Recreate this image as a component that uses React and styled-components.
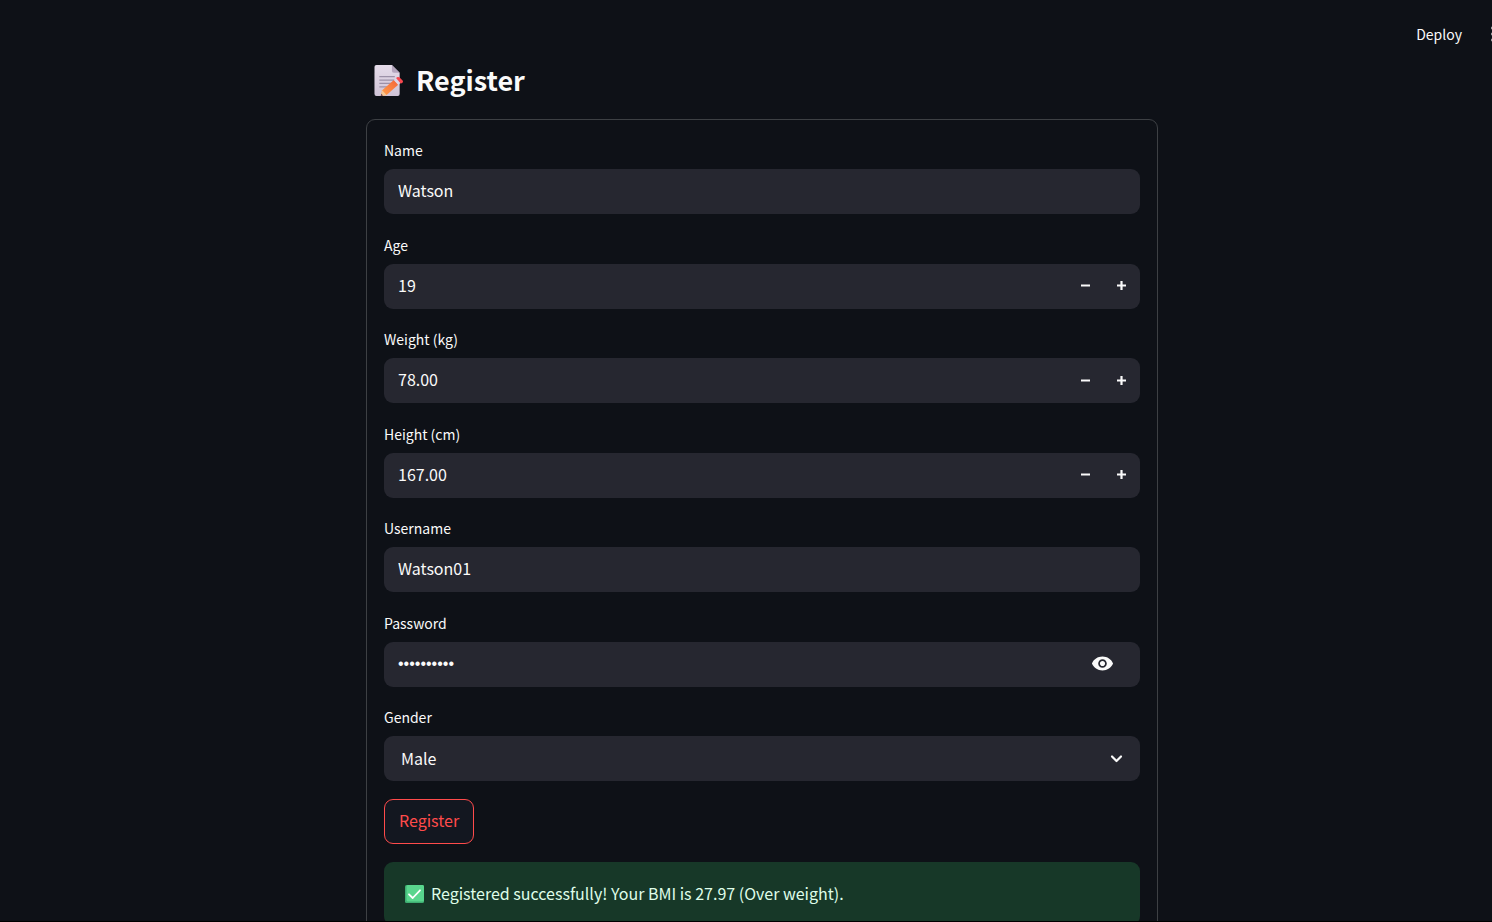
import React, { useState } from "react";
import styled, { createGlobalStyle } from "styled-components";

const GlobalStyle = createGlobalStyle`
  *, *::before, *::after { box-sizing: border-box; }
  html, body { margin: 0; background: #0e1117; }
  body, input, select, button {
    font-family: "Noto Sans CJK SC", "Noto Sans", sans-serif;
    font-size: 16px;
    color: #fafafa;
  }
`;

const Page = styled.div`
  height: 100vh;
  overflow: hidden;
  background: #0e1117;
  border-bottom: 1px solid #000;
`;

const Header = styled.header`
  display: flex;
  justify-content: flex-end;
  align-items: center;
  gap: 15px;
  height: 60px;
  padding-top: 8px;
`;

const HeaderButton = styled.button`
  flex: none;
  border: 0;
  background: none;
  padding: 0 14px;
  font-size: 14px;
  line-height: 24px;
`;

const MenuButton = styled.button`
  flex: none;
  width: 1px;
  height: 24px;
  padding: 0;
  border: 0;
  background: none;
  overflow: hidden;

  svg { display: block; }
`;

const Main = styled.main`
  padding-left: 32px;
`;

const Column = styled.div`
  max-width: 792px;
  margin: 0 auto;
`;

const Title = styled.h1`
  display: flex;
  align-items: center;
  gap: 12px;
  margin: 0;
  padding: 0 8px 19px;
  font-size: 27px;
  line-height: 40px;
  font-weight: 700;
`;

const Form = styled.form`
  border: 1px solid #3d4044;
  border-radius: 9px;
  padding: 17px;
`;

const Fields = styled.div`
  display: flex;
  flex-direction: column;
  justify-content: space-between;
  min-height: 644px;
`;

const FieldBox = styled.div`
  display: flex;
  flex-direction: column;
  gap: 5px;
`;

const Label = styled.label`
  font-size: 14px;
  line-height: 27px;
`;

const Control = styled.div`
  display: flex;
  align-items: center;
  height: 45px;
  padding-right: 1px;
  border-radius: 9px;
  background: #262730;
  overflow: hidden;
`;

const Input = styled.input`
  flex: 1;
  min-width: 0;
  height: 45px;
  padding: 0 14px 3px;
  border: 0;
  outline: 0;
  background: none;
  appearance: textfield;

  &[type="password"] {
    padding-bottom: 0;
    font-family: "Liberation Sans", sans-serif;
  }
  &::-webkit-inner-spin-button { appearance: none; margin: 0; }
`;

const IconButton = styled.button`
  display: grid;
  place-items: center;
  width: ${(p) => (p.$wide ? "74px" : "36px")};
  height: 45px;
  padding: 0 0 1px;
  border: 0;
  background: none;
`;

const SelectWrap = styled(Control)`
  display: grid;
  padding-right: 0;

  > * { grid-area: 1 / 1; }
  svg { justify-self: end; margin-right: 14px; pointer-events: none; }
`;

const Select = styled.select`
  width: 100%;
  height: 45px;
  padding: 0 17px 2px;
  border: 0;
  outline: 0;
  background: none;
  appearance: none;

  option { background: #262730; }
`;

const Submit = styled.button`
  display: block;
  margin: 18px 0;
  height: 45px;
  padding: 0 14px 3px;
  border: 1px solid #ff4b4b;
  border-radius: 9px;
  background: #131720;
  color: #ff4b4b;
`;

const Alert = styled.div`
  display: flex;
  align-items: center;
  gap: 7px;
  padding: 18px 21px;
  border-radius: 9px;
  background: #173828;
  color: #dffde9;
  line-height: 27px;
`;

const MemoIcon = () => (
  <svg width="30" height="31" viewBox="0 0 30 32" aria-hidden="true">
    <defs>
      <linearGradient id="paper" x1="0" y1="0" x2="0" y2="1">
        <stop offset="0" stopColor="#e5dcea" />
        <stop offset="1" stopColor="#cfc3d6" />
      </linearGradient>
      <linearGradient id="pencil" x1="0" y1="1" x2="1" y2="0">
        <stop offset="0" stopColor="#ffa14a" />
        <stop offset="1" stopColor="#f4653a" />
      </linearGradient>
    </defs>
    <path d="M2 0H18L26 8V30Q26 32 24 32H2Q0 32 0 30V2Q0 0 2 0Z" fill="url(#paper)" />
    <path d="M18 0L26 8H20Q18 8 18 6Z" fill="#b3a5bd" />
    <path d="M5 12H21M5 15.500H21M5 19H18M5 22.500H14" stroke="#9c91a8" strokeWidth="1.300" />
    <path d="M8 26L20 15.500L24.500 20.500L12.500 31L6.500 32Z" fill="url(#pencil)" />
    <path d="M8 26L12.500 31L6.500 32Z" fill="#f6c793" />
    <path d="M7 29.800L8.800 31.500L6.500 32Z" fill="#5d3a4a" />
    <path d="M20 15.500L22.300 13.500L27 18.300L24.500 20.500Z" fill="#dfd5e4" />
    <path d="M22.300 13.500L23.800 12.500Q25 12 26 13L29 16Q30 17.200 29 18L27.200 19.300Z" fill="#f8484f" />
  </svg>
);

const CheckIcon = () => (
  <svg width="19" height="18" viewBox="0 0 19 18" role="img" aria-label="Success">
    <rect width="19" height="18" rx="1.500" fill="#3fae72" />
    <rect x="1.500" width="17.500" height="16.500" rx="1.500" fill="#59d68d" />
    <path d="M4 9.300L7.700 13L15 5.300" fill="none" stroke="#fff" strokeWidth="1.800" strokeLinecap="round" strokeLinejoin="round" />
  </svg>
);

const MinusIcon = () => (
  <svg width="9" height="9" viewBox="0 0 9 9" aria-hidden="true">
    <path d="M0 4.500H9" stroke="#fafafa" strokeWidth="2.200" />
  </svg>
);

const PlusIcon = () => (
  <svg width="9" height="9" viewBox="0 0 9 9" aria-hidden="true">
    <path d="M0 4.500H9M4.500 0V9" stroke="#fafafa" strokeWidth="2.200" />
  </svg>
);

const EyeIcon = () => (
  <svg width="23" height="23" viewBox="0 0 24 24" fill="#fafafa" aria-hidden="true">
    <path d="M12 4.800C7 4.800 2.730 7.700 1 12c1.730 4.300 6 7.200 11 7.200s9.270-2.900 11-7.200c-1.730-4.300-6-7.200-11-7.200zM12 16.500c-2.500 0-4.500-2-4.500-4.500s2-4.500 4.500-4.500 4.500 2 4.500 4.500-2 4.500-4.500 4.500zm0-7.200c-1.500 0-2.700 1.200-2.700 2.700s1.200 2.700 2.700 2.700 2.700-1.200 2.700-2.700-1.200-2.700-2.700-2.700z" />
  </svg>
);

const ChevronIcon = () => (
  <svg width="19" height="19" viewBox="0 0 19 19" aria-hidden="true">
    <path d="M5 7.500L9.500 12L14 7.500" fill="none" stroke="#fafafa" strokeWidth="2.200" strokeLinecap="round" strokeLinejoin="round" />
  </svg>
);

const DotsIcon = () => (
  <svg width="6" height="24" viewBox="0 0 6 24" fill="#fafafa" aria-hidden="true">
    <circle cx="2" cy="6" r="1.700" />
    <circle cx="2" cy="12" r="1.700" />
    <circle cx="2" cy="18" r="1.700" />
  </svg>
);

function TextField({ id, label, value, type = "text", children }) {
  const [text, setText] = useState(value);
  return (
    <FieldBox>
      <Label htmlFor={id}>{label}</Label>
      <Control>
        <Input id={id} type={type} value={text} onChange={(e) => setText(e.target.value)} />
        {children}
      </Control>
    </FieldBox>
  );
}

function NumberField({ id, label, value, digits = 0 }) {
  const [text, setText] = useState(value);
  const step = (by) => setText((Number(text) + by).toFixed(digits));
  return (
    <FieldBox>
      <Label htmlFor={id}>{label}</Label>
      <Control>
        <Input id={id} type="number" step="any" value={text} onChange={(e) => setText(e.target.value)} />
        <IconButton type="button" aria-label={`Decrease ${label}`} onClick={() => step(-1)}><MinusIcon /></IconButton>
        <IconButton type="button" aria-label={`Increase ${label}`} onClick={() => step(1)}><PlusIcon /></IconButton>
      </Control>
    </FieldBox>
  );
}

export default function App() {
  const [visible, setVisible] = useState(false);
  return (
    <Page>
      <GlobalStyle />
      <Header>
        <HeaderButton type="button">Deploy</HeaderButton>
        <MenuButton type="button" aria-label="Main menu"><DotsIcon /></MenuButton>
      </Header>
      <Main>
        <Column>
          <Title><MemoIcon />Register</Title>
          <Form onSubmit={(e) => e.preventDefault()}>
            <Fields>
              <TextField id="name" label="Name" value="Watson" />
              <NumberField id="age" label="Age" value="19" />
              <NumberField id="weight" label="Weight (kg)" value="78.00" digits={2} />
              <NumberField id="height" label="Height (cm)" value="167.00" digits={2} />
              <TextField id="username" label="Username" value="Watson01" />
              <TextField id="password" label="Password" value="watson0123" type={visible ? "text" : "password"}>
                <IconButton type="button" $wide aria-label="Show password" onClick={() => setVisible(!visible)}><EyeIcon /></IconButton>
              </TextField>
              <FieldBox>
                <Label htmlFor="gender">Gender</Label>
                <SelectWrap>
                  <Select id="gender" defaultValue="Male">
                    <option>Male</option>
                    <option>Female</option>
                  </Select>
                  <ChevronIcon />
                </SelectWrap>
              </FieldBox>
            </Fields>
            <Submit type="submit">Register</Submit>
            <Alert role="alert"><CheckIcon />Registered successfully! Your BMI is 27.97 (Over weight).</Alert>
          </Form>
        </Column>
      </Main>
    </Page>
  );
}
